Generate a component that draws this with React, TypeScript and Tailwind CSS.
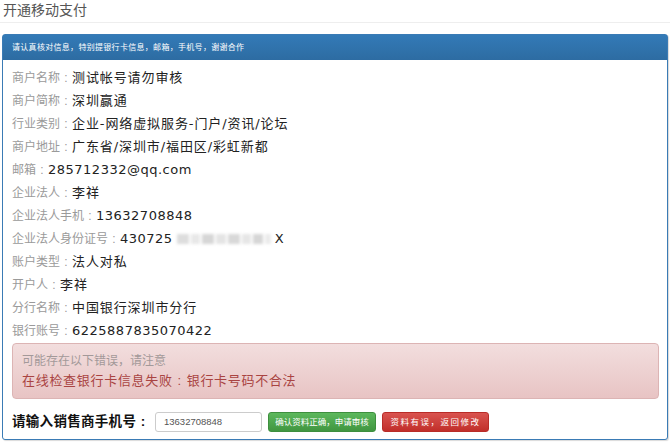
import React from "react";

const rows: { label: string; value: React.ReactNode; cn?: boolean }[] = [
  { label: "商户名称", value: "测试帐号请勿审核", cn: true },
  { label: "商户简称", value: "深圳赢通", cn: true },
  { label: "行业类别", value: "企业-网络虚拟服务-门户/资讯/论坛", cn: true },
  { label: "商户地址", value: "广东省/深圳市/福田区/彩虹新都", cn: true },
  { label: "邮箱", value: "285712332@qq.com" },
  { label: "企业法人", value: "李祥", cn: true },
  { label: "企业法人手机", value: "13632708848" },
  {
    label: "企业法人身份证号",
    value: (
      <span className="inline-flex items-center">
        430725
        <span className="mx-[4px] inline-flex h-[12px] w-[94px] items-center gap-[2px] blur-[1.5px]">
          <span className="h-[10px] w-[14px] bg-[#dddddd]" />
          <span className="h-[10px] w-[10px] bg-[#e8e8e8]" />
          <span className="h-[10px] w-[14px] bg-[#d6d6d6]" />
          <span className="h-[10px] w-[12px] bg-[#e4e4e4]" />
          <span className="h-[10px] w-[14px] bg-[#d8d8d8]" />
          <span className="h-[10px] w-[10px] bg-[#e6e6e6]" />
          <span className="h-[10px] w-[12px] bg-[#d6d6d6]" />
          <span className="h-[10px] w-[6px] bg-[#ebebeb]" />
        </span>
        X
      </span>
    ),
  },
  { label: "账户类型", value: "法人对私", cn: true },
  { label: "开户人", value: "李祥", cn: true },
  { label: "分行名称", value: "中国银行深圳市分行", cn: true },
  { label: "银行账号", value: "6225887835070422" },
];

const font = { fontFamily: '"Liberation Sans", "Noto Sans CJK SC", sans-serif' };
const valFont = { fontFamily: '"DejaVu Sans", "Noto Sans CJK SC", sans-serif' };

function Colon({ w = "w-[12px]" }: { w?: string }) {
  return <span className={"inline-block text-center " + w}>:</span>;
}

export default function App() {
  return (
    <div className="h-[443px] w-[670px] overflow-hidden bg-white" style={font}>
      <div className="h-[23px] border-b border-[#eeeeee] pl-[3px] text-[14px] leading-[20px] text-[#555]">
        开通移动支付
      </div>
      <div className="mx-[2px] mt-[11px] rounded-[3px] border border-[#3a7bb5] bg-white shadow-[1px_1px_1px_rgba(0,0,0,0.15)]">
        <div className="h-[25px] bg-gradient-to-b from-[#337ab7] to-[#2d6ca2] pl-[9px] text-[8px] leading-[25px] tracking-[0.3px] text-white">
          请认真核对信息，特别提银行卡信息，邮箱，手机号，谢谢合作
        </div>
        <div className="pb-[7px] pl-[9px] pr-[8px] pt-[6px]">
          <div className="flex flex-col">
            {rows.map((r) => (
              <div key={r.label} className="flex h-[23px] items-center">
                <span className="text-[12px] text-[#9a9a9a]">
                  {r.label}
                  <Colon />
                </span>
                <span
                  className={
                    r.cn
                      ? "text-[13px] tracking-[0.9px] text-[#222]"
                      : "text-[13px] tracking-[0.5px] text-[#222]"
                  }
                  style={valFont}
                >
                  {r.value}
                </span>
              </div>
            ))}
          </div>
          <div className="mt-[1px] rounded-[4px] border border-[#dcb4b4] bg-gradient-to-b from-[#f2dede] to-[#e8c4c4] pb-[7px] pl-[9px] pt-[7px]">
            <div className="text-[12px] leading-[20px] text-[#a39999]">可能存在以下错误，请注意</div>
            <div className="text-[13px] leading-[20px] tracking-[0.7px] text-[#a94442]">
              在线检查银行卡信息失败
              <Colon w="w-[14px]" />
              银行卡号码不合法
            </div>
          </div>
          <div className="mt-[13px] flex h-[20px] items-center">
            <span className="w-[143px] text-[13.5px] font-bold tracking-[0.3px] text-[#111]">
              请输入销售商手机号
              <Colon w="w-[14px]" />
            </span>
            <div className="flex h-[20px] w-[107px] items-center rounded-[3px] border border-[#cccccc] pl-[8px] text-[9.5px] text-[#555]">
              13632708848
            </div>
            <button className="ml-[6px] flex h-[20px] w-[108px] items-center justify-center rounded-[3px] border border-[#3e8f3e] bg-gradient-to-b from-[#5cb85c] to-[#419641] text-[8.5px] text-white">
              确认资料正确，申请审核
            </button>
            <button className="ml-[6px] flex h-[20px] w-[107px] items-center justify-center rounded-[3px] border border-[#b92c28] bg-gradient-to-b from-[#d9534f] to-[#c12e2a] text-[8.5px] tracking-[1.5px] text-white">
              资料有误，返回修改
            </button>
          </div>
        </div>
      </div>
    </div>
  );
}
